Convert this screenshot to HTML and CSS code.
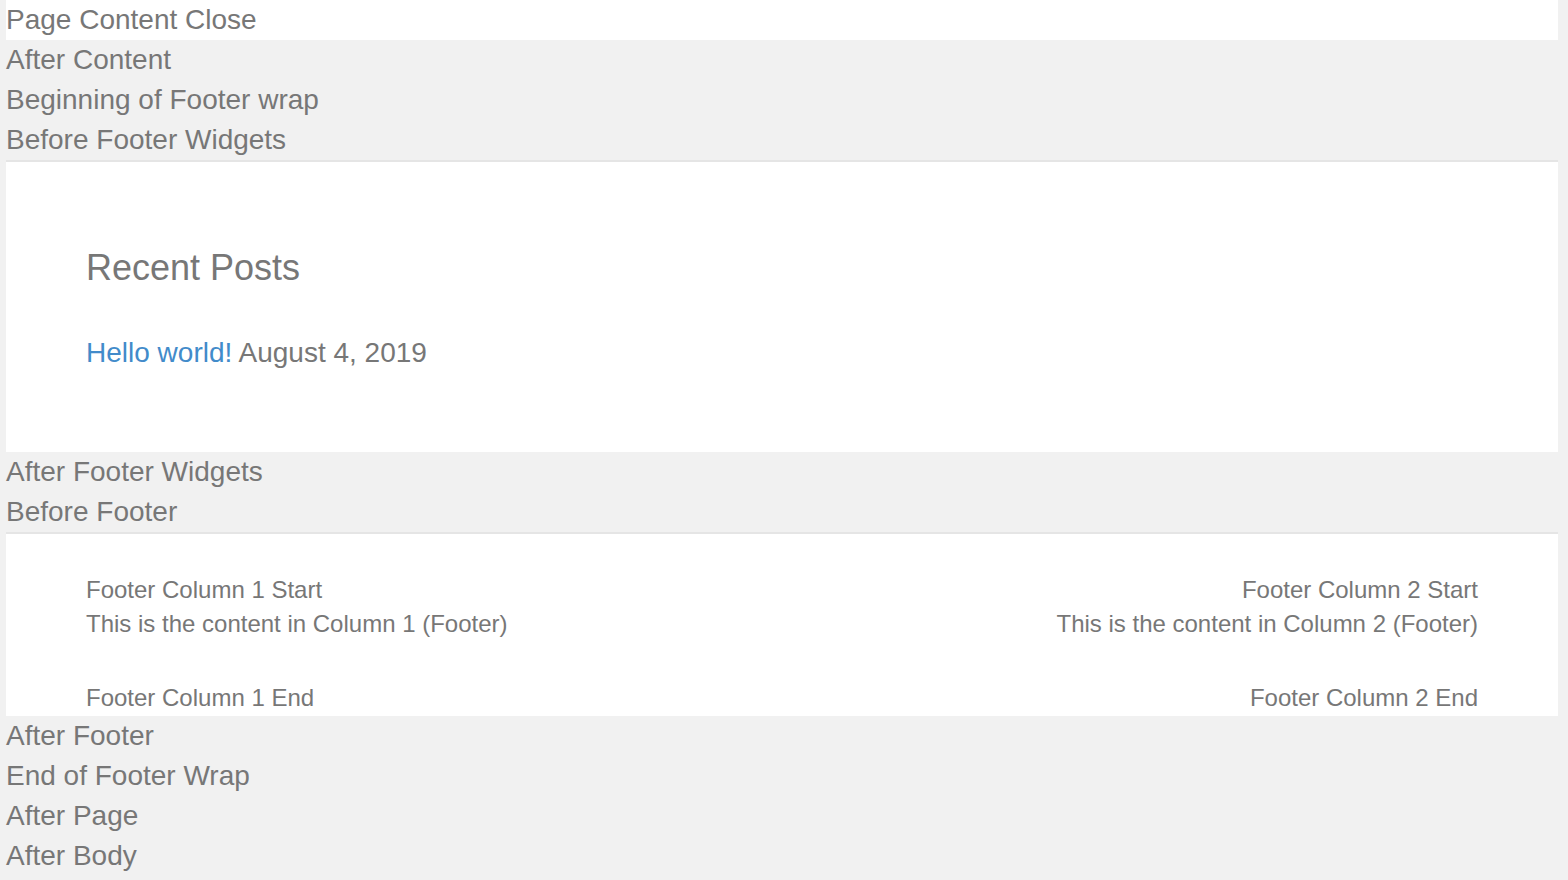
FILE: index.html
```html
<!DOCTYPE html>
<html>
<head>
<meta charset="utf-8">
<link rel="stylesheet" href="styles.css">
</head>
<body>
<div class="page">
  <div class="hook hook-white">Page Content Close</div>
  <div class="hook">After Content</div>
  <div class="hook">Beginning of Footer wrap</div>
  <div class="hook">Before Footer Widgets</div>
  <section class="widgets">
    <h2 class="widget-title">Recent Posts</h2>
    <p class="post"><a class="post-link" href="#">Hello world!</a> <span>August 4, 2019</span></p>
  </section>
  <div class="hook">After Footer Widgets</div>
  <div class="hook">Before Footer</div>
  <footer class="footer">
    <div class="col">
      <div class="line">Footer Column 1 Start</div>
      <p class="content">This is the content in Column 1 (Footer)</p>
      <div class="line">Footer Column 1 End</div>
    </div>
    <div class="col col-right">
      <div class="line">Footer Column 2 Start</div>
      <p class="content">This is the content in Column 2 (Footer)</p>
      <div class="line">Footer Column 2 End</div>
    </div>
  </footer>
  <div class="hook">After Footer</div>
  <div class="hook">End of Footer Wrap</div>
  <div class="hook">After Page</div>
  <div class="hook">After Body</div>
</div>
</body>
</html>
```
FILE: styles.css
```css
html, body {
  margin: 0;
  padding: 0;
  background: #f1f1f1;
}
body {
  font-family: "Liberation Sans", Arial, Helvetica, sans-serif;
  color: #777777;
  height: 880px;
  overflow: hidden;
}
.page {
  padding: 0 10px 0 6px;
}
.hook {
  font-size: 28px;
  line-height: 40px;
}
.hook-white {
  background: #ffffff;
}
.widgets {
  background: #ffffff;
  border-top: 2px solid #e5e5e5;
  padding: 86px 80px 79px;
}
.widget-title {
  margin: 0 0 45px;
  font-size: 36px;
  line-height: 40px;
  font-weight: normal;
}
.post {
  margin: 0;
  font-size: 28px;
  line-height: 40px;
}
.post-link {
  color: #428bca;
  text-decoration: none;
}
.footer {
  background: #ffffff;
  border-top: 2px solid #e5e5e5;
  padding: 39px 80px 1px;
  display: flex;
  justify-content: space-between;
  font-size: 24px;
  line-height: 34px;
}
.col-right {
  text-align: right;
}
.content {
  margin: 0 0 40px;
}
```
